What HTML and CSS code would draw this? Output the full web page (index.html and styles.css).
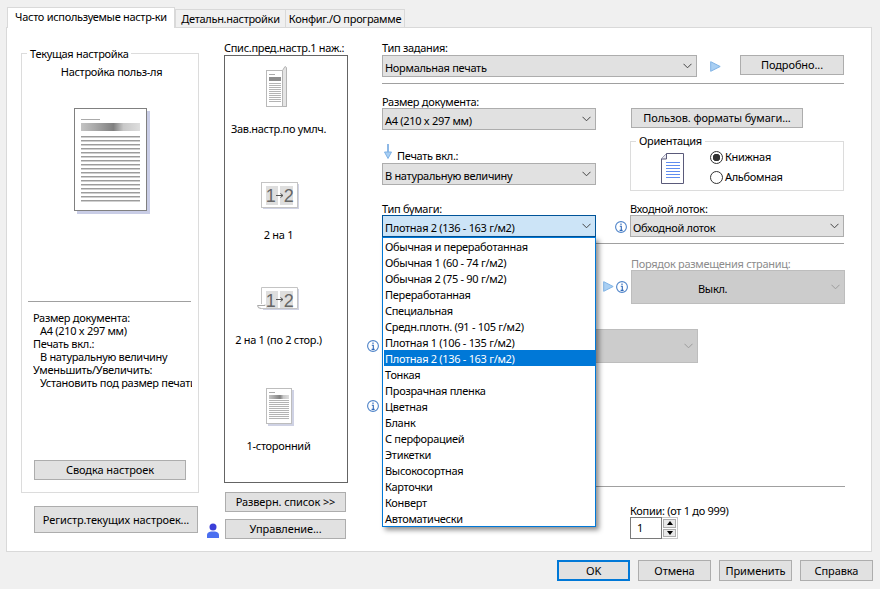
FILE: index.html
```html
<!DOCTYPE html>
<html lang="ru">
<head>
  <meta charset="UTF-8" />
  <meta name="viewport" content="width=device-width, initial-scale=1.0" />
  <title>Настройка печати</title>
  <link rel="stylesheet" href="styles.css">
</head>
<body>
  <svg class="defs" width="0" height="0" aria-hidden="true">
    <defs>
      <symbol id="chevron" viewBox="0 0 9 6">
        <path d="M0.5 0.8 L4.5 4.8 L8.5 0.8" fill="none" stroke="#444" stroke-width="1"/>
      </symbol>
      <symbol id="info" viewBox="0 0 12 12">
        <circle cx="6" cy="6" r="5.4" fill="#fff" stroke="#4f84c9" stroke-width="1.1"/>
        <path d="M6 2.4v1.6M4.8 5.3H6.3V9.3M4.6 9.4H7.6" fill="none" stroke="#2f68b8" stroke-width="1.1"/>
      </symbol>
      <symbol id="play" viewBox="0 0 11 11">
        <path d="M0.7 0.7 L10.2 5.5 L0.7 10.3 Z" fill="#a9cff3" stroke="#7fb2e5" stroke-width="1"/>
      </symbol>
      <linearGradient id="band" x1="0" x2="1" y1="0" y2="0">
        <stop offset="0" stop-color="#c4c4c4"/>
        <stop offset="0.25" stop-color="#a8a8a8"/>
        <stop offset="0.55" stop-color="#808080"/>
        <stop offset="0.72" stop-color="#c8c8c8"/>
        <stop offset="1" stop-color="#dedede"/>
      </linearGradient>
      <pattern id="big-lines" width="8" height="4" patternUnits="userSpaceOnUse">
        <rect width="8" height="1" fill="#9c9c9c"/>
        <rect y="1" width="8" height="1" fill="#d0d0d0"/>
      </pattern>
      <pattern id="small-lines" width="8" height="2" patternUnits="userSpaceOnUse">
        <rect width="8" height="1" fill="#b4b4b4"/>
      </pattern>
    </defs>
  </svg>

  <div class="tabs">
    <div class="tab active">Часто используемые настр-ки</div>
    <div class="tab tab-detail">Детальн.настройки</div>
    <div class="tab tab-config">Конфиг./О программе</div>
  </div>

  <div class="panel">
    <div class="col-left">
      <fieldset class="group current">
        <legend>Текущая настройка</legend>
        <div class="current-body">
          <div class="current-title">Настройка польз-ля</div>
          <svg class="page-preview" width="76" height="106" viewBox="0 0 76 106">
            <rect x="3" y="3" width="73" height="103" fill="#c9cde6"/>
            <rect x="0.5" y="0.5" width="72" height="102" fill="#fff" stroke="#808080"/>
            <rect x="7" y="11" width="19" height="1" fill="#aaa"/>
            <rect x="7" y="15" width="59" height="8" fill="url(#band)"/>
            <rect x="7" y="26" width="59" height="70" fill="url(#big-lines)"/>
          </svg>
          <div class="current-sep"></div>
          <div class="summary">
            <div>Размер документа:</div>
            <div class="indent">A4 (210 x 297 мм)</div>
            <div>Печать вкл.:</div>
            <div class="indent">В натуральную величину</div>
            <div>Уменьшить/Увеличить:</div>
            <div class="indent">Установить под размер печати</div>
          </div>
          <div class="btn btn-summary">Сводка настроек</div>
        </div>
      </fieldset>
      <div class="btn btn-register">Регистр.текущих настроек...</div>
    </div>

    <div class="col-mid">
      <div class="label">Спис.пред.настр.1 наж.:</div>
      <div class="preset-list">
        <div class="preset">
          <svg width="48" height="48" viewBox="0 0 48 48">
            <rect x="11.500" y="7.500" width="20" height="36" fill="#fff" stroke="#b9b9b9"/>
            <path d="M27.500 7.500 L30 3.500 L31.500 4.500 V43.500 H27.500 Z" fill="#e4e4e4" stroke="#b4b4b4"/>
            <rect x="14" y="11" width="6" height="1" fill="#aaa"/>
            <rect x="14" y="14" width="12" height="4" fill="#8e8e8e"/>
            <rect x="14" y="19" width="12" height="20" fill="url(#small-lines)"/>
          </svg>
          <div class="preset-name">Зав.настр.по умлч.</div>
        </div>
        <div class="preset">
          <svg width="48" height="48" viewBox="0 0 48 48">
            <rect x="8" y="15" width="36" height="25" fill="#cfd2e4"/>
            <rect x="6.5" y="13.5" width="36" height="25" fill="#fff" stroke="#c4c4c4"/>
            <rect x="11" y="17" width="12" height="19" fill="#dedede"/>
            <rect x="25" y="17" width="13" height="19" fill="#dedede"/>
            <text x="15.5" y="33" class="thumb-num">1</text>
            <text x="33.5" y="33" class="thumb-num">2</text>
            <path d="M21 26.500h7M25.500 24.500l2.500 2-2.500 2" fill="none" stroke="#555" stroke-width="1"/>
          </svg>
          <div class="preset-name">2 на 1</div>
        </div>
        <div class="preset">
          <svg width="48" height="48" viewBox="0 0 48 48">
            <rect x="8" y="15" width="36" height="21" fill="#cfd2e4"/>
            <path d="M6.500 30 V13.500 H42.500 V34.500 H6.500" fill="#fff" stroke="#c4c4c4"/>
            <rect x="11" y="17" width="12" height="17" fill="#dedede"/>
            <rect x="25" y="17" width="13" height="17" fill="#dedede"/>
            <text x="15.5" y="33" class="thumb-num">1</text>
            <text x="33.5" y="33" class="thumb-num">2</text>
            <path d="M21 25.500h7M25.500 23.500l2.500 2-2.500 2" fill="none" stroke="#555" stroke-width="1"/>
            <path d="M2.500 31.500 H10 V30.500 M2.500 31.500 Q2.500 34.500 6.500 34.500" fill="#fff" stroke="#a8a8a8"/>
          </svg>
          <div class="preset-name">2 на 1 (по 2 стор.)</div>
        </div>
        <div class="preset">
          <svg width="48" height="48" viewBox="0 0 48 48">
            <rect x="13" y="10" width="26" height="36" fill="#cfd2e4"/>
            <rect x="11.500" y="8.500" width="25" height="35" fill="#fff" stroke="#bdbdbd"/>
            <rect x="14" y="12" width="6" height="1" fill="#aaa"/>
            <rect x="14" y="15" width="20" height="4" fill="url(#band)"/>
            <rect x="14" y="20" width="20" height="20" fill="url(#small-lines)"/>
          </svg>
          <div class="preset-name">1-сторонний</div>
        </div>
      </div>
      <div class="btn btn-expand">Разверн. список &gt;&gt;</div>
      <div class="manage-row">
        <svg class="user-icon" width="12" height="15" viewBox="0 0 12 15">
          <circle cx="6" cy="4" r="3.500" fill="#3b3fd8"/>
          <path d="M0 15 V12 Q0 9 4 8.500 H8 Q12 9 12 12 V15 Z" fill="#4a6ff0"/>
        </svg>
        <div class="btn btn-manage">Управление...</div>
      </div>
    </div>

    <div class="col-right">
      <div class="label job-label">Тип задания:</div>
      <div class="row job-row">
        <div class="select select-job"><span>Нормальная печать</span><svg class="chev"><use href="#chevron"/></svg></div>
        <svg class="play job-play"><use href="#play"/></svg>
        <div class="btn btn-detail">Подробно...</div>
      </div>
      <div class="rule rule-job"></div>

      <div class="row paper-row">
        <div class="paper-left">
          <div class="label">Размер документа:</div>
          <div class="select"><span>A4 (210 x 297 мм)</span><svg class="chev"><use href="#chevron"/></svg></div>
          <div class="print-on">
            <svg width="8" height="15" viewBox="0 0 8 15">
              <path d="M4 0 V9" stroke="#8db8e6" stroke-width="2"/>
              <path d="M0.500 8 H7.500 L4 14.500 Z" fill="#a9cff3" stroke="#7fb2e5" stroke-width="1"/>
            </svg>
            <span>Печать вкл.:</span>
          </div>
          <div class="select"><span>В натуральную величину</span><svg class="chev"><use href="#chevron"/></svg></div>
        </div>
        <div class="paper-right">
          <div class="btn btn-custom">Пользов. форматы бумаги...</div>
          <fieldset class="group orientation">
            <legend>Ориентация</legend>
            <div class="orient-body">
              <svg class="orient-icon" width="23" height="31" viewBox="0 0 23 31">
                <path d="M5.500 0.500 H22.500 V30.500 H0.500 V6 Z" fill="#fff" stroke="#5a5a7a"/>
                <path d="M5.500 0.500 V6 H0.500" fill="#e8e8f0" stroke="#5a5a7a"/>
                <path d="M5 9.500h14M5 12.500h14M5 15.500h14M5 18.500h14M5 21.500h14M5 24.500h14" stroke="#5f8cf0"/>
              </svg>
              <div class="radios">
                <div class="radio-line"><span class="radio checked"></span>Книжная</div>
                <div class="radio-line"><span class="radio"></span>Альбомная</div>
              </div>
            </div>
          </fieldset>
        </div>
      </div>

      <div class="row type-row">
        <div class="type-left">
          <div class="label">Тип бумаги:</div>
          <div class="select select-open"><span>Плотная 2 (136 - 163 г/м2)</span><svg class="chev"><use href="#chevron"/></svg>
            <div class="drop-list">
              <div class="drop-item">Обычная и переработанная</div>
              <div class="drop-item">Обычная 1 (60 - 74 г/м2)</div>
              <div class="drop-item">Обычная 2 (75 - 90 г/м2)</div>
              <div class="drop-item">Переработанная</div>
              <div class="drop-item">Специальная</div>
              <div class="drop-item">Средн.плотн. (91 - 105 г/м2)</div>
              <div class="drop-item">Плотная 1 (106 - 135 г/м2)</div>
              <div class="drop-item picked">Плотная 2 (136 - 163 г/м2)</div>
              <div class="drop-item">Тонкая</div>
              <div class="drop-item">Прозрачная пленка</div>
              <div class="drop-item">Цветная</div>
              <div class="drop-item">Бланк</div>
              <div class="drop-item">С перфорацией</div>
              <div class="drop-item">Этикетки</div>
              <div class="drop-item">Высокосортная</div>
              <div class="drop-item">Карточки</div>
              <div class="drop-item">Конверт</div>
              <div class="drop-item">Автоматически</div>
            </div>
          </div>
        </div>
        <svg class="info tray-info"><use href="#info"/></svg>
        <div class="tray">
          <div class="label">Входной лоток:</div>
          <div class="select"><span>Обходной лоток</span><svg class="chev"><use href="#chevron"/></svg></div>
        </div>
      </div>
      <div class="rule rule-tray"></div>

      <div class="row order-row">
        <svg class="play"><use href="#play"/></svg>
        <svg class="info order-info"><use href="#info"/></svg>
        <div class="order">
          <div class="label off">Порядок размещения страниц:</div>
          <div class="select select-off select-order"><span>Выкл.</span><svg class="chev"><use href="#chevron"/></svg></div>
        </div>
      </div>

      <div class="row hidden-row">
        <svg class="info"><use href="#info"/></svg>
        <div class="select select-off select-wide"><svg class="chev"><use href="#chevron"/></svg></div>
      </div>
      <div class="row info-row">
        <svg class="info"><use href="#info"/></svg>
      </div>
      <div class="rule rule-copies"></div>

      <div class="copies">
        <div class="label">Копии: (от 1 до 999)</div>
        <div class="spin">
          <div class="spin-value">1</div>
          <div class="spin-btns">
            <div class="spin-btn"><span class="tri-up"></span></div>
            <div class="spin-btn"><span class="tri-down"></span></div>
          </div>
        </div>
      </div>
    </div>
  </div>

  <div class="footer">
    <div class="btn btn-foot btn-default">OK</div>
    <div class="btn btn-foot">Отмена</div>
    <div class="btn btn-foot">Применить</div>
    <div class="btn btn-foot">Справка</div>
  </div>
</body>
</html>
```

FILE: styles.css
```css
* {
  box-sizing: border-box;
}
body {
  margin: 0;
  width: 880px;
  height: 589px;
  overflow: hidden;
  background: #f0f0f0;
  color: #000;
  font-family: "Noto Sans", Roboto, sans-serif;
  font-size: 11px;
  letter-spacing: -0.3px;
  line-height: 14px;
}
.defs {
  position: absolute;
}

/* tabs */
.tabs {
  display: flex;
  align-items: flex-end;
  height: 28px;
  padding: 7px 0 0 7px;
}
.tab {
  height: 18px;
  margin-bottom: 1px;
  padding-top: 2px;
  background: #f0f0f0;
  border: 1px solid #d9d9d9;
  border-bottom: 0;
  margin-left: -1px;
  text-align: center;
  white-space: nowrap;
}
.tab.active {
  position: relative;
  z-index: 1;
  width: 168px;
  height: 21px;
  margin: 0;
  padding-top: 2px;
  background: #fff;
}
.tab-detail {
  width: 111px;
  margin-left: 0;
}
.tab-config {
  width: 120px;
}

/* main panel */
.panel {
  display: flex;
  width: 866px;
  height: 525px;
  margin: -1px 0 0 6px;
  padding-left: 14px;
  background: #fff;
  border: 1px solid #d9d9d9;
}
.col-left {
  width: 178px;
  margin-right: 7px;
  padding-top: 18px;
}
.col-mid {
  width: 142px;
  margin-right: 18px;
  padding: 12px 0 0 18px;
}
.col-right {
  width: 480px;
  padding-top: 12px;
}
.group {
  margin: 0;
  padding: 0;
  min-width: 0;
  border: 1px solid #dcdcdc;
}
.group legend {
  margin-left: 5px;
  padding: 2px 3px 0;
  line-height: 12px;
}
.current {
  width: 178px;
}
.current-body {
  display: flex;
  flex-direction: column;
  height: 432px;
  padding-top: 5px;
}
.current-title {
  padding-left: 3px;
  text-align: center;
}
.page-preview {
  display: block;
  margin: 29px 0 0 52px;
}
.current-sep {
  height: 1px;
  margin: 87px 7px 0 6px;
  background: #a0a0a0;
}
.summary {
  width: 159px;
  margin: 9px 0 0 11px;
  line-height: 13px;
  white-space: nowrap;
  overflow: hidden;
}
.indent {
  padding-left: 7px;
}
.btn {
  display: flex;
  align-items: center;
  justify-content: center;
  height: 20px;
  background: #e1e1e1;
  border: 1px solid #adadad;
  letter-spacing: -0.1px;
  white-space: nowrap;
}
.btn-summary {
  width: 152px;
  margin: auto 0 12px 12px;
}
.btn-register {
  width: 164px;
  height: 27px;
  margin: 13px 0 0 13px;
}

/* preset list */
.label {
  height: 14px;
  line-height: 16px;
  white-space: nowrap;
}
.label.off {
  color: #8c8c8c;
}
.preset-list {
  width: 124px;
  height: 428px;
  margin-top: 1px;
  padding-top: 7px;
  border: 1px solid #646464;
}
.preset {
  display: flex;
  flex-direction: column;
  align-items: center;
  width: 107px;
  height: 105.7px;
}
.preset svg {
  display: block;
  flex: none;
}
.preset-name {
  margin-top: 11px;
  white-space: nowrap;
}
.thumb-num {
  font-family: "Liberation Sans", sans-serif;
  font-size: 18px;
  fill: #666;
  text-anchor: middle;
}
.btn-expand {
  width: 121px;
  margin: 9px 0 0 1px;
}
.manage-row {
  display: flex;
  align-items: flex-end;
  margin: 7px 0 0 -17px;
}
.user-icon {
  flex: none;
  margin: 0 6px 1px 0;
}
.btn-manage {
  width: 121px;
}

/* right column */
.row {
  display: flex;
}
.job-label,
.job-row,
.rule,
.paper-row,
.type-row {
  margin-left: 16px;
}
.select {
  position: relative;
  display: flex;
  align-items: center;
  justify-content: space-between;
  width: 214px;
  height: 22px;
  padding: 0 4px 0 2px;
  background: #e1e1e1;
  border: 1px solid #adadad;
  white-space: nowrap;
}
.select > span {
  padding-top: 3px;
}
.chev {
  flex: none;
  width: 9px;
  height: 6px;
}
.select-job {
  width: 315px;
  margin-top: 1px;
}
.play {
  flex: none;
  width: 11px;
  height: 11px;
}
.job-play {
  margin: 7px 19px 0 13px;
}
.btn-detail {
  width: 104px;
  margin-top: 1px;
}
.rule {
  width: 462px;
  height: 1px;
  background: #a0a0a0;
}
.rule-job {
  margin-top: 6px;
}
.paper-row {
  margin-top: 10px;
}
.paper-left {
  width: 214px;
}
.print-on {
  display: flex;
  align-items: flex-end;
  height: 19px;
  margin-top: 14px;
}
.print-on svg {
  margin: 0 5px 4px 2px;
}
.paper-right {
  margin: 14px 0 0 34px;
}
.btn-custom {
  width: 172px;
  margin-left: 1px;
}
.orientation {
  width: 214px;
  height: 57px;
  margin-top: 6px;
}
.orientation legend {
  padding: 0 3px;
  line-height: 14px;
}
.orient-body {
  display: flex;
}
.orient-icon {
  margin: 5px 0 0 30px;
}
.radios {
  margin: -1px 0 0 26px;
}
.radio-line {
  display: flex;
  align-items: center;
  height: 20px;
}
.radio {
  width: 13px;
  height: 13px;
  margin-right: 2px;
  background: #fff;
  border: 1px solid #333;
  border-radius: 50%;
}
.radio.checked {
  background: radial-gradient(circle, #333 3.5px, #fff 4px);
}
.type-row {
  margin-top: 10px;
}
.type-left {
  width: 214px;
}
.select-open {
  background: #cce4f7;
  border: 1px solid #005499;
  z-index: 2;
}
.drop-list {
  position: absolute;
  top: 21px;
  left: -1px;
  width: 214px;
  height: 290px;
  padding: 0 0 0 1px;
  background: #fff;
  border: 1px solid #0078d7;
  box-shadow: 3px 3px 5px rgba(0, 0, 0, 0.45);
}
.drop-item {
  height: 16px;
  padding-left: 1px;
  line-height: 18px;
}
.drop-item.picked {
  background: #0078d7;
  color: #fff;
}
.tray-info {
  margin: 20px 3px 0 19px;
}
.info {
  flex: none;
  width: 12px;
  height: 12px;
}
.tray {
  width: 214px;
}
.rule-tray {
  margin-top: 6px;
}
.order-row {
  align-items: flex-start;
  margin: 12px 0 0 237px;
}
.order-row .play {
  margin-top: 25px;
}
.order-info {
  margin: 25px 3px 0 2px;
}
.select-order {
  width: 214px;
  height: 34px;
  background: #ccc;
  border-color: #bdbdbd;
}
.select-off {
  background: #ccc;
  border-color: #bdbdbd;
}
.select-off .chev {
  opacity: 0.35;
}
.select-order span {
  margin-left: 64px;
}
.hidden-row {
  align-items: center;
  margin-top: 25px;
  margin-left: 1px;
}
.select-wide {
  justify-content: flex-end;
  width: 316px;
  height: 34px;
  margin-left: 3px;
}
.info-row {
  margin: 37px 0 0 1px;
}
.rule-copies {
  width: 463px;
  margin-top: 74px;
}
.copies {
  margin: 16px 0 0 264px;
}
.spin {
  display: flex;
  width: 48px;
  height: 22px;
}
.spin-value {
  width: 32px;
  padding: 3px 0 0 6px;
  border: 1px solid #7a7a7a;
}
.spin-btns {
  display: flex;
  flex: 1;
  flex-direction: column;
  gap: 1px;
  padding: 1px;
  border: 1px solid #c8c8c8;
  border-left: 0;
}
.spin-btn {
  display: flex;
  flex: 1;
  align-items: center;
  justify-content: center;
  background: #e8e8e8;
  border: 1px solid #adadad;
}
.tri-up,
.tri-down {
  width: 0;
  height: 0;
  border-left: 3.5px solid transparent;
  border-right: 3.5px solid transparent;
}
.tri-up {
  border-bottom: 4px solid #000;
}
.tri-down {
  border-top: 4px solid #000;
}

/* bottom buttons */
.footer {
  display: flex;
  justify-content: flex-end;
  gap: 8px;
  padding: 8px 7px 0 0;
}
.btn-foot {
  width: 73px;
  height: 21px;
}
.btn-default {
  border: 2px solid #0078d7;
}
```
